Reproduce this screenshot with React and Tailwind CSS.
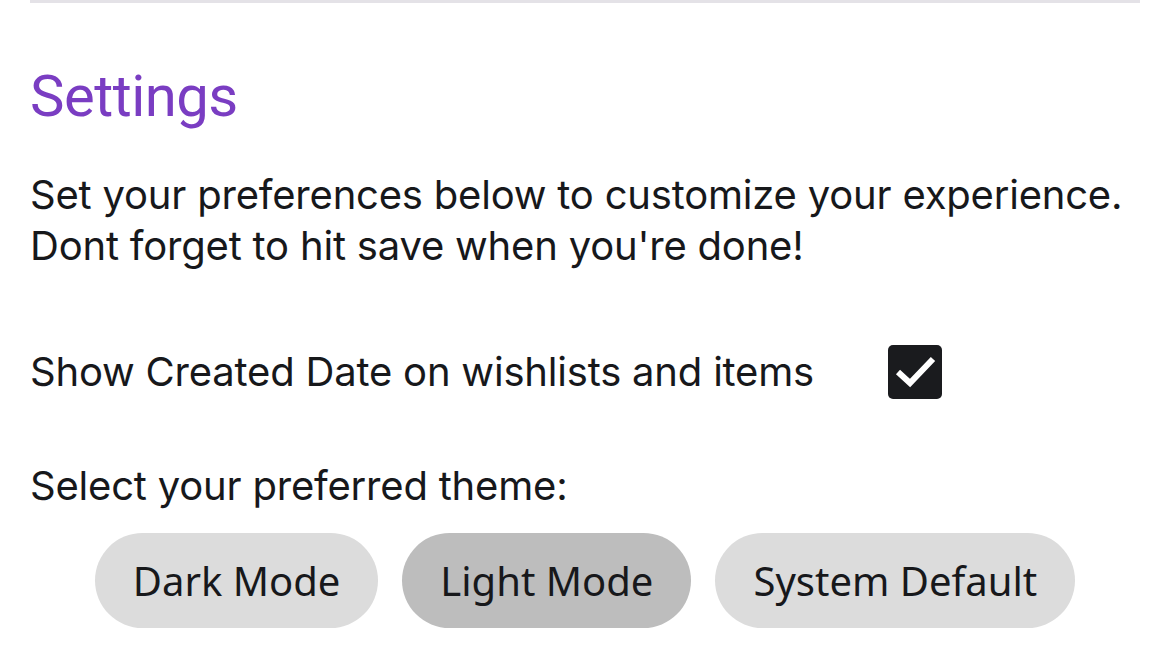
import React, { useState } from 'react';

const themes = ['Dark Mode', 'Light Mode', 'System Default'];

const App = () => {
  const [showDate, setShowDate] = useState(true);
  const [theme, setTheme] = useState('Light Mode');

  return (
    <div className="min-h-screen bg-white px-[30px] text-[#17181b]" style={{ fontFamily: 'Inter, sans-serif' }}>
      <div className="h-[3px] bg-[#e4e2e7]" />

      <h1 className="mt-[64px] text-[58px] leading-none tracking-[-0.5px] text-[#7a3dc2]" style={{ fontFamily: 'Roboto, sans-serif' }}>
        Settings
      </h1>

      <p className="mt-[44px] text-[40px] leading-[51px] tracking-[-0.2px]">
        Set your preferences below to customize your experience.
        <br />
        Dont forget to hit save when you're done!
      </p>

      <div className="mt-[74px] flex items-center">
        <span className="text-[40px] leading-[52px] tracking-[-0.2px]">Show Created Date on wishlists and items</span>
        <button
          onClick={() => setShowDate(!showDate)}
          className="ml-[74px] flex h-[54px] w-[54px] items-center justify-center rounded-[5px] bg-[#1a1b1e]"
        >
          {showDate && (
            <svg width="42" height="42" viewBox="0 0 42 42" fill="none" stroke="white" strokeWidth="6">
              <path d="M4 21l12 11L39 8" />
            </svg>
          )}
        </button>
      </div>

      <p className="mt-[61px] text-[40px] leading-[52px] tracking-[-0.2px]">Select your preferred theme:</p>

      <div className="mt-[21px] flex justify-center gap-[24px]" style={{ fontFamily: '"Noto Sans", sans-serif' }}>
        {themes.map((t) => (
          <button
            key={t}
            onClick={() => setTheme(t)}
            className={`h-[95px] rounded-full px-[38px] text-[40px] text-[#17181b] ${
              theme === t ? 'bg-[#bdbdbd]' : 'bg-[#dcdcdc]'
            }`}
          >
            {t}
          </button>
        ))}
      </div>
    </div>
  );
};

export default App;
